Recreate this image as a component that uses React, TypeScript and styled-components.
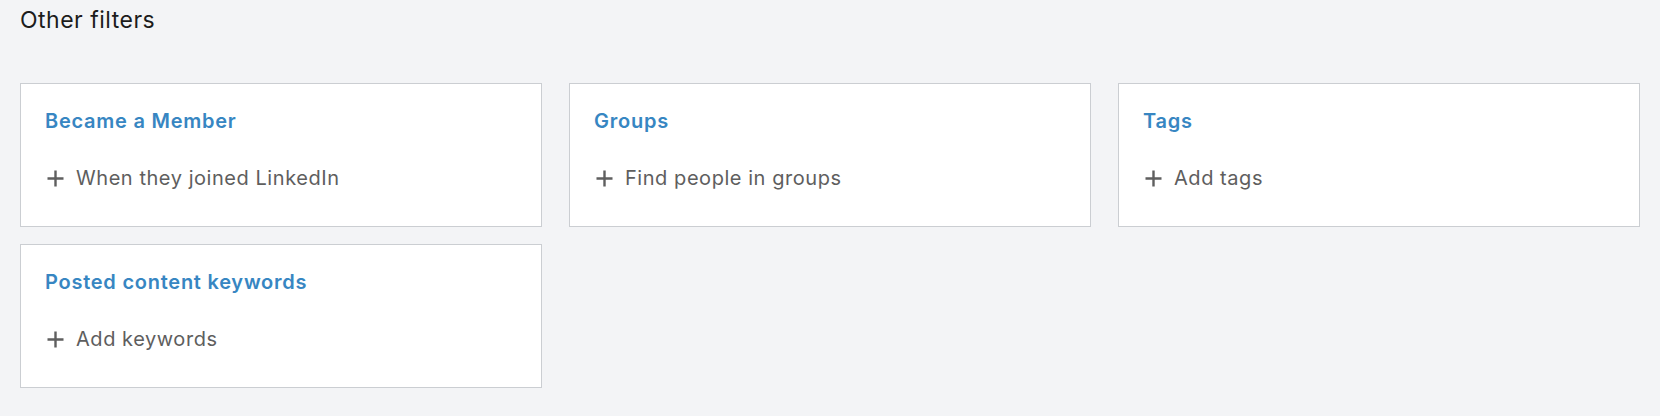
import React from 'react';
import { createGlobalStyle, styled } from 'styled-components';

const GlobalStyle = createGlobalStyle`
  html, body {
    margin: 0;
    padding: 0;
    background: #f3f4f6;
  }
  body {
    font-family: Inter, "Noto Sans", "Liberation Sans", sans-serif;
  }
`;

type Filter = {
  title: string;
  action: string;
};

const filters: Filter[] = [
  { title: 'Became a Member', action: 'When they joined LinkedIn' },
  { title: 'Groups', action: 'Find people in groups' },
  { title: 'Tags', action: 'Add tags' },
  { title: 'Posted content keywords', action: 'Add keywords' },
];

const Page = styled.main`
  width: 1660px;
  height: 416px;
  box-sizing: border-box;
  padding: 6px 20px 0;
  background: #f3f4f6;
`;

const Heading = styled.h2`
  margin: 0 0 49px;
  font-size: 23px;
  line-height: 28px;
  font-weight: 400;
  letter-spacing: 0.5px;
  color: #1c1c1c;
`;

const Grid = styled.section`
  display: grid;
  grid-template-columns: repeat(3, 522px);
  column-gap: 27px;
  row-gap: 17px;
`;

const Card = styled.div`
  box-sizing: border-box;
  height: 144px;
  padding: 25px 24px 0;
  background: #ffffff;
  border: 1px solid #cbced2;
  display: flex;
  flex-direction: column;
`;

const CardTitle = styled.h3`
  margin: 0 0 33px;
  font-size: 20px;
  line-height: 24px;
  font-weight: 600;
  letter-spacing: 0.75px;
  color: #3786c2;
`;

const AddRow = styled.button`
  display: flex;
  align-items: center;
  gap: 12px;
  padding: 0;
  border: none;
  background: none;
  cursor: pointer;
  font-family: inherit;
  font-size: 20px;
  line-height: 24px;
  letter-spacing: 0.55px;
  color: #5e5e5e;
  text-align: left;
`;

const PlusIcon = styled.svg`
  width: 17px;
  height: 17px;
  margin-left: 2px;
  flex-shrink: 0;
`;

const Plus = () => (
  <PlusIcon viewBox="0 0 17 17" aria-hidden="true">
    <path d="M8.5 0.5v16M0.5 8.5h16" stroke="#5f5f5f" strokeWidth="2.4" fill="none" />
  </PlusIcon>
);

export default function App() {
  return (
    <>
      <GlobalStyle />
      <Page>
        <Heading>Other filters</Heading>
        <Grid>
          {filters.map((filter) => (
            <Card key={filter.title}>
              <CardTitle>{filter.title}</CardTitle>
              <AddRow type="button">
                <Plus />
                {filter.action}
              </AddRow>
            </Card>
          ))}
        </Grid>
      </Page>
    </>
  );
}
